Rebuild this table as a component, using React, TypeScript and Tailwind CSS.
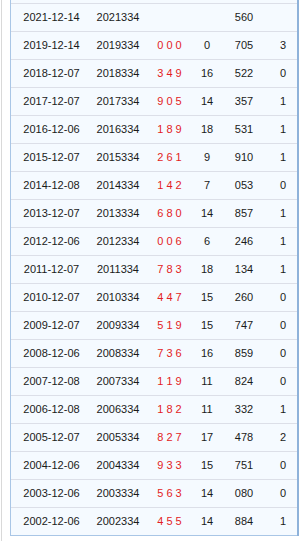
import React from "react";

type Row = [string, string, string, string, string, string];

const rows: Row[] = [
  ["2021-12-14", "2021334", "", "", "560", ""],
  ["2019-12-14", "2019334", "0 0 0", "0", "705", "3"],
  ["2018-12-07", "2018334", "3 4 9", "16", "522", "0"],
  ["2017-12-07", "2017334", "9 0 5", "14", "357", "1"],
  ["2016-12-06", "2016334", "1 8 9", "18", "531", "1"],
  ["2015-12-07", "2015334", "2 6 1", "9", "910", "1"],
  ["2014-12-08", "2014334", "1 4 2", "7", "053", "0"],
  ["2013-12-07", "2013334", "6 8 0", "14", "857", "1"],
  ["2012-12-06", "2012334", "0 0 6", "6", "246", "1"],
  ["2011-12-07", "2011334", "7 8 3", "18", "134", "1"],
  ["2010-12-07", "2010334", "4 4 7", "15", "260", "0"],
  ["2009-12-07", "2009334", "5 1 9", "15", "747", "0"],
  ["2008-12-06", "2008334", "7 3 6", "16", "859", "0"],
  ["2007-12-08", "2007334", "1 1 9", "11", "824", "0"],
  ["2006-12-08", "2006334", "1 8 2", "11", "332", "1"],
  ["2005-12-07", "2005334", "8 2 7", "17", "478", "2"],
  ["2004-12-06", "2004334", "9 3 3", "15", "751", "0"],
  ["2003-12-06", "2003334", "5 6 3", "14", "080", "0"],
  ["2002-12-06", "2002334", "4 5 5", "14", "884", "1"],
];

export default function App() {
  return (
    <div
      className="flex w-[299px] h-[541px] bg-white overflow-hidden text-[11px] text-[#1a1a1a]"
      style={{ fontFamily: '"Liberation Sans", Arial, sans-serif' }}
    >
      <div className="w-px ml-px bg-[#d9d9d9]" />
      <div className="w-[8px]" />
      <div className="flex flex-col self-start">
        <div className="flex">
          <div className="w-[287px] bg-[#f5faff] border-l border-b border-[#a9c6e6]">
            <div className="h-[3px]" />
            {rows.map((r) => (
              <div
                key={r[0]}
                className="grid grid-cols-[81px_52px_51px_24px_50px_28px] h-[28px] border-t border-[#dcdfe8] items-center text-center"
              >
                <span>{r[0]}</span>
                <span>{r[1]}</span>
                <span className="text-[#e31c24] whitespace-pre">{r[2]}</span>
                <span>{r[3]}</span>
                <span>{r[4]}</span>
                <span>{r[5]}</span>
              </div>
            ))}
          </div>
          <div className="w-[2px] bg-[#8eb2da]" />
        </div>
      </div>
    </div>
  );
}
